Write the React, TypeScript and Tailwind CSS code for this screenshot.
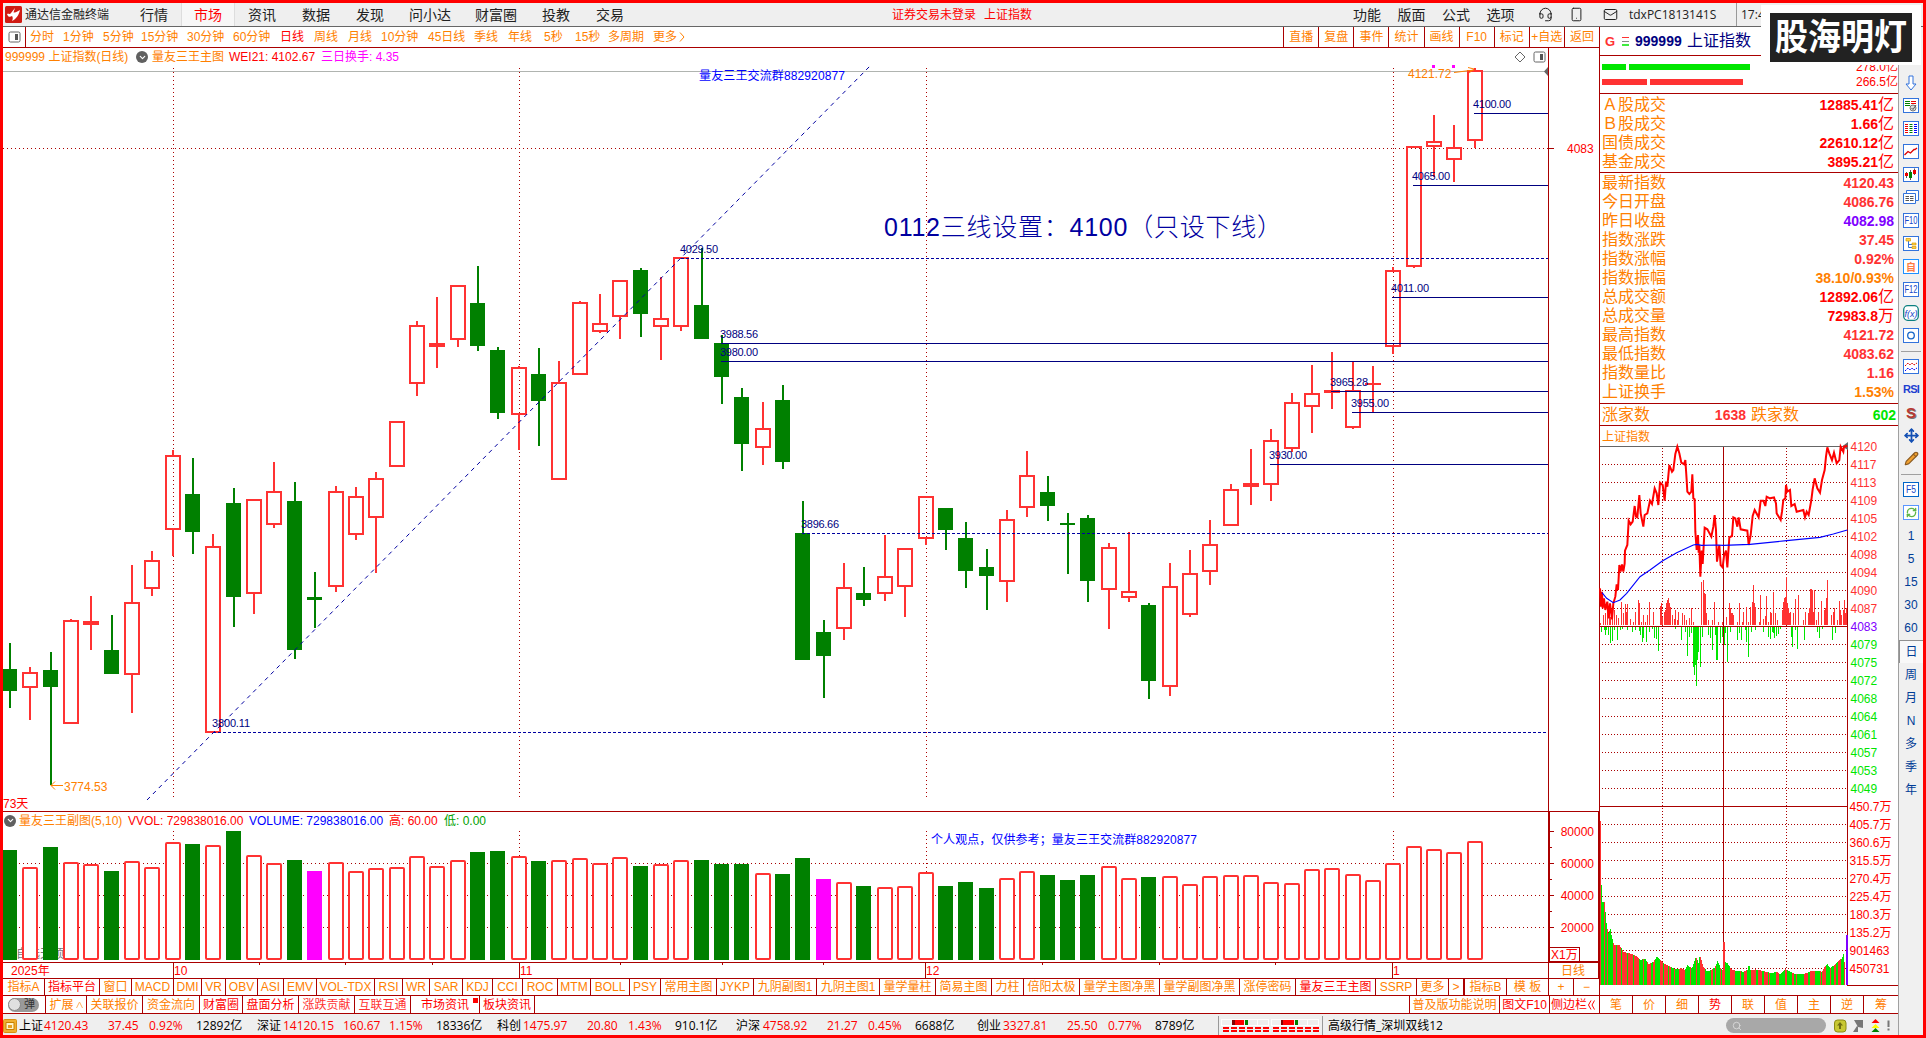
import { ReactNode } from 'react'
import { ChevronDown, Headset, Mail, Move, Pencil, RefreshCw, Search, Smartphone } from 'lucide-react'
import clsx from 'clsx'

const menus = [
  { label: '行情', w: 'w-[54px]' },
  { label: '市场', w: 'w-[54px]', active: true },
  { label: '资讯', w: 'w-[54px]' },
  { label: '数据', w: 'w-[54px]' },
  { label: '发现', w: 'w-[54px]' },
  { label: '问小达', w: 'w-[66px]' },
  { label: '财富圈', w: 'w-[66px]' },
  { label: '投教', w: 'w-[54px]' },
  { label: '交易', w: 'w-[54px]' },
]

const periods = [
  { label: '分时', w: 'w-[33px]' },
  { label: '1分钟', w: 'w-[40px]' },
  { label: '5分钟', w: 'w-[38px]' },
  { label: '15分钟', w: 'w-[46px]' },
  { label: '30分钟', w: 'w-[46px]' },
  { label: '60分钟', w: 'w-[47px]' },
  { label: '日线', w: 'w-[34px]', active: true },
  { label: '周线', w: 'w-[34px]' },
  { label: '月线', w: 'w-[33px]' },
  { label: '10分钟', w: 'w-[47px]' },
  { label: '45日线', w: 'w-[46px]' },
  { label: '季线', w: 'w-[34px]' },
  { label: '年线', w: 'w-[36px]' },
  { label: '5秒', w: 'w-[31px]' },
  { label: '15秒', w: 'w-[33px]' },
  { label: '多周期', w: 'w-[45px]' },
  { label: '更多', w: 'w-[26px]' },
]

const tools = ['直播', '复盘', '事件', '统计', '画线', 'F10', '标记', '+自选', '返回']

const indicators = [
  { label: '指标A', w: 'w-[42px]' },
  { label: '指标平台', w: 'w-[55px]', red: true },
  { label: '窗口', w: 'w-[32px]' },
  { label: 'MACD', w: 'w-[42px]' },
  { label: 'DMI', w: 'w-[28px]' },
  { label: 'VR', w: 'w-[24px]' },
  { label: 'OBV', w: 'w-[32px]' },
  { label: 'ASI', w: 'w-[26px]' },
  { label: 'EMV', w: 'w-[33px]' },
  { label: 'VOL-TDX', w: 'w-[58px]' },
  { label: 'RSI', w: 'w-[28px]' },
  { label: 'WR', w: 'w-[27px]' },
  { label: 'SAR', w: 'w-[33px]' },
  { label: 'KDJ', w: 'w-[30px]' },
  { label: 'CCI', w: 'w-[30px]' },
  { label: 'ROC', w: 'w-[35px]' },
  { label: 'MTM', w: 'w-[33px]' },
  { label: 'BOLL', w: 'w-[39px]' },
  { label: 'PSY', w: 'w-[31px]' },
  { label: '常用主图', w: 'w-[56px]' },
  { label: 'JYKP', w: 'w-[37px]' },
  { label: '九阴副图1', w: 'w-[63px]' },
  { label: '九阴主图1', w: 'w-[63px]' },
  { label: '量学量柱', w: 'w-[56px]' },
  { label: '简易主图', w: 'w-[56px]' },
  { label: '力柱', w: 'w-[32px]' },
  { label: '倍阳太极', w: 'w-[56px]' },
  { label: '量学主图净黑', w: 'w-[80px]' },
  { label: '量学副图净黑', w: 'w-[80px]' },
  { label: '涨停密码', w: 'w-[56px]' },
  { label: '量友三王主图', w: 'w-[80px]', red: true },
  { label: 'SSRP', w: 'w-[41px]' },
  { label: '更多', w: 'w-[32px]' },
  { label: '>', w: 'w-[15px]' },
  { label: '指标B', w: 'w-[43px] border-l' },
  { label: '模 板', w: 'w-[42px]' },
  { label: '+', w: 'w-[25px]' },
  { label: '−', w: 'w-[26px]' },
]

const pages = [
  { label: '扩展', w: 'w-[41px]', color: 'text-[#ff8000]' },
  { label: '关联报价', w: 'w-[56px]', color: 'text-[#ff8000]' },
  { label: '资金流向', w: 'w-[57px]', color: 'text-[#ff8000]' },
  { label: '财富圈', w: 'w-[43px]', color: 'text-[#f00]' },
  { label: '盘面分析', w: 'w-[56px]', color: 'text-[#f00]' },
  { label: '涨跌贡献', w: 'w-[56px]', color: 'text-[#ff3232]' },
  { label: '互联互通', w: 'w-[56px]', color: 'text-[#ff3232]' },
  { label: '市场资讯', w: 'w-[69px]', color: 'text-[#f00]', dot: true },
  { label: '板块资讯', w: 'w-[55px]', color: 'text-[#f00]' },
]

const quotes = [
  { t: '上证', w: 'w-[25px]' },
  { t: '4120.43', w: 'w-[64px]', red: true },
  { t: '37.45', w: 'w-[41px]', red: true },
  { t: '0.92%', w: 'w-[47px]', red: true },
  { t: '12892亿', w: 'w-[61px]' },
  { t: '深证', w: 'w-[26px]' },
  { t: '14120.15', w: 'w-[60px]', red: true },
  { t: '160.67', w: 'w-[46px]', red: true },
  { t: '1.15%', w: 'w-[47px]', red: true },
  { t: '18336亿', w: 'w-[61px]' },
  { t: '科创', w: 'w-[26px]' },
  { t: '1475.97', w: 'w-[64px]', red: true },
  { t: '20.80', w: 'w-[41px]', red: true },
  { t: '1.43%', w: 'w-[47px]', red: true },
  { t: '910.1亿', w: 'w-[61px]' },
  { t: '沪深', w: 'w-[27px]' },
  { t: '4758.92', w: 'w-[64px]', red: true },
  { t: '21.27', w: 'w-[41px]', red: true },
  { t: '0.45%', w: 'w-[47px]', red: true },
  { t: '6688亿', w: 'w-[62px]' },
  { t: '创业', w: 'w-[26px]' },
  { t: '3327.81', w: 'w-[64px]', red: true },
  { t: '25.50', w: 'w-[41px]', red: true },
  { t: '0.77%', w: 'w-[47px]', red: true },
  { t: '8789亿', w: 'w-[62px]' },
]

const turnover = [
  ['Ａ股成交', '12885.41', '亿'],
  ['Ｂ股成交', '1.66', '亿'],
  ['国债成交', '22610.12', '亿'],
  ['基金成交', '3895.21', '亿'],
]

const stats = [
  { k: '最新指数', v: '4120.43', c: 'text-[#ff3232]' },
  { k: '今日开盘', v: '4086.76', c: 'text-[#ff3232]' },
  { k: '昨日收盘', v: '4082.98', c: 'text-[#8000ff]' },
  { k: '指数涨跌', v: '37.45', c: 'text-[#ff3232]' },
  { k: '指数涨幅', v: '0.92%', c: 'text-[#ff3232]' },
  { k: '指数振幅', v: '38.10/0.93%', c: 'text-[#ff8000]' },
  { k: '总成交额', v: '12892.06', u: '亿', c: 'text-[#f00]' },
  { k: '总成交量', v: '72983.8', u: '万', c: 'text-[#f00]' },
  { k: '最高指数', v: '4121.72', c: 'text-[#ff3232]' },
  { k: '最低指数', v: '4083.62', c: 'text-[#ff3232]' },
  { k: '指数量比', v: '1.16', c: 'text-[#ff3232]' },
  { k: '上证换手', v: '1.53%', c: 'text-[#ff8000]' },
]

// kind, high, body top, body bottom, low, volume top
type Bar = [string, number, number, number, number, number]
const bars: Bar[] = [
  ['g', 643, 669, 691, 708, 850], ['r', 667, 672, 688, 720, 867], ['g', 652, 670, 687, 785, 847],
  ['r', 619, 620, 724, 724, 862], ['r', 596, 621, 625, 650, 864], ['g', 615, 650, 674, 674, 871],
  ['r', 565, 602, 675, 713, 861], ['r', 551, 560, 589, 596, 867], ['r', 450, 455, 530, 556, 842],
  ['g', 458, 494, 532, 554, 844], ['r', 534, 546, 733, 733, 845], ['g', 488, 503, 597, 627, 831],
  ['r', 499, 499, 594, 614, 855], ['r', 462, 491, 525, 528, 863], ['g', 482, 501, 650, 659, 860],
  ['g', 572, 597, 600, 628, 871], ['r', 486, 491, 587, 592, 862], ['r', 487, 496, 535, 540, 871],
  ['r', 472, 478, 518, 573, 868], ['r', 421, 421, 467, 467, 867], ['r', 321, 325, 384, 396, 856],
  ['r', 297, 343, 347, 368, 866], ['r', 285, 285, 340, 347, 860], ['g', 266, 303, 346, 351, 852],
  ['g', 347, 350, 413, 419, 851], ['r', 366, 367, 415, 450, 856], ['g', 348, 374, 401, 446, 861],
  ['r', 361, 382, 480, 480, 860], ['r', 301, 302, 375, 375, 858], ['r', 294, 323, 332, 333, 863],
  ['r', 280, 280, 317, 339, 857], ['g', 268, 270, 314, 337, 866], ['r', 277, 318, 327, 360, 864],
  ['r', 257, 257, 327, 331, 860], ['g', 248, 305, 339, 339, 860], ['g', 335, 343, 377, 404, 864],
  ['g', 388, 397, 444, 471, 864], ['r', 402, 428, 448, 465, 873], ['g', 385, 400, 462, 469, 874],
  ['g', 501, 533, 660, 660, 858], ['g', 620, 632, 656, 698, 879], ['r', 563, 587, 629, 640, 882],
  ['g', 567, 593, 600, 606, 886], ['r', 535, 576, 594, 601, 887], ['r', 548, 548, 587, 617, 886],
  ['r', 496, 496, 539, 545, 872], ['g', 508, 508, 530, 550, 886], ['g', 522, 538, 571, 588, 882],
  ['g', 549, 567, 576, 610, 888], ['r', 510, 519, 582, 602, 878], ['r', 451, 475, 508, 517, 871],
  ['g', 476, 492, 506, 521, 875], ['g', 513, 523, 525, 574, 880], ['g', 515, 518, 581, 602, 875],
  ['r', 543, 547, 590, 629, 866], ['r', 532, 591, 598, 602, 878], ['g', 603, 605, 681, 699, 877],
  ['r', 563, 586, 687, 696, 876], ['r', 550, 573, 615, 617, 884], ['r', 520, 544, 572, 585, 876],
  ['r', 484, 489, 526, 526, 875], ['r', 449, 483, 487, 505, 875], ['r', 429, 440, 485, 501, 882],
  ['r', 393, 402, 449, 452, 883], ['r', 365, 393, 407, 433, 869], ['r', 352, 390, 393, 409, 868],
  ['r', 362, 390, 428, 429, 874], ['r', 366, 383, 385, 412, 880], ['r', 267, 270, 347, 354, 863],
  ['r', 146, 146, 267, 268, 846], ['r', 115, 141, 147, 177, 849], ['r', 125, 147, 160, 182, 852],
  ['r', 68, 70, 141, 148, 841],
]

const highlighted = [15, 40]
const barX = (i: number) => Math.round(10 + 20.345 * i)

const levels = [
  { x: 1474, y: 113, t: '4100.00' },
  { x: 1413, y: 185, t: '4065.00' },
  { x: 681, y: 258, t: '4029.50', dash: true },
  { x: 1392, y: 297, t: '4011.00' },
  { x: 721, y: 343, t: '3988.56' },
  { x: 721, y: 361, t: '3980.00' },
  { x: 1331, y: 391, t: '3965.28' },
  { x: 1352, y: 412, t: '3955.00' },
  { x: 1270, y: 464, t: '3930.00' },
  { x: 802, y: 533, t: '3896.66', dash: true },
  { x: 213, y: 732, t: '3800.11', dash: true },
]

const months = [173, 519, 926, 1393]

function Candle({ bar, i }: { bar: Bar; i: number }) {
  const [kind, hi, top, bot, lo] = bar
  const x = barX(i)
  const color = kind === 'g' ? '#008000' : '#ff3232'
  const solid = kind === 'g' || bot - top <= 4
  return (
    <g>
      {top > hi && <rect x={x - 1} y={hi} width={2} height={top - hi} fill={color} />}
      {lo > bot && <rect x={x - 1} y={bot} width={2} height={lo - bot} fill={color} />}
      {solid ? (
        <rect x={x - 8} y={top} width={kind === 'g' ? 15 : 16} height={bot - top} fill={color} />
      ) : (
        <rect x={x - 7} y={top + 1} width={14} height={bot - top - 2} fill="none" stroke={color} strokeWidth={2} />
      )}
    </g>
  )
}

function MainChart() {
  return (
    <svg className="block shrink-0 overflow-visible" width={1596} height={746} viewBox="3 66 1596 746" fontSize={12}>
      <g shapeRendering="crispEdges">
        <path d="M3 71.5H1548" stroke="#b0b4b0" />
        {months.map((x) => (
          <path key={x} d={`M${x + 0.5} 68V798`} stroke="#a00" strokeDasharray="1 3" />
        ))}
        <path d="M3 148.5H1548" stroke="#a00" strokeDasharray="1 3" />
        {bars.map((b, i) => <Candle key={i} bar={b} i={i} />)}
        {levels.map((l) => (
          <path key={l.t} d={`M${l.x} ${l.y + 0.5}H1548`} stroke={l.dash ? '#0000a0' : '#000080'} strokeDasharray={l.dash ? '3 2' : undefined} />
        ))}
        <path d="M1548.5 66V812M3 811.5H1599M1548 148.5H1554" stroke="#a00" />
        <rect x={1432} y={65} width={3} height={3} fill="#f0f" />
        <rect x={1452} y={65} width={3} height={3} fill="#f0f" />
      </g>
      <path d="M147 800L870 66" stroke="#0000a0" strokeDasharray="4.2 4.2" />
      <path d="M1548 67L1544 71.5L1548 76Z" fill="#666" />
      {levels.map((l) => (
        <text key={l.t} x={l.x - 1} y={l.y - 5} fontSize={11} textLength={38} fill="#000080">{l.t}</text>
      ))}
      <text x={699} y={80} fill="#00f" textLength={146}>量友三王交流群882920877</text>
      <text x={884} y={236} fontSize={25} fill="#0000a0" textLength={398} fontWeight={300}>0112三线设置：4100（只设下线）</text>
      <g fill="#ff8000" stroke="none">
        <text x={1408} y={78}>4121.72</text>
        <text x={64} y={791}>3774.53</text>
        <path d="M51 785.5H63M55 781.5L51 785.5L55 789.5M1454 72.5L1474 70M1468 67.5L1474 69L1469 73" fill="none" stroke="#ff8000" />
      </g>
      <text x={1567} y={153} fill="#f00">4083</text>
      <text x={3} y={808} fill="#f00">73天</text>
    </svg>
  )
}

function VolumeChart() {
  return (
    <svg className="block shrink-0 overflow-visible" width={1596} height={150} viewBox="3 829 1596 150" fontSize={12}>
      <g shapeRendering="crispEdges" stroke="#a00" strokeDasharray="1 3">
        {months.map((x) => <path key={x} d={`M${x + 0.5} 831V960`} />)}
        {[863, 895, 927].map((y) => <path key={y} d={`M3 ${y + 0.5}H1545`} />)}
      </g>
      <text x={16} y={958} fill="#777">自选天顶</text>
      {bars.map((b, i) => {
        const x = barX(i)
        if (highlighted.includes(i)) return <rect key={i} x={x - 8} y={b[5]} width={15} height={960 - b[5]} fill="#f0f" />
        if (b[0] === 'g') return <rect key={i} x={x - 8} y={b[5]} width={15} height={960 - b[5]} fill="#008000" />
        return <rect key={i} x={x - 7} y={b[5] + 1} width={14} height={958 - b[5]} rx={1} fill="#fff" stroke="#ff3232" strokeWidth={2} />
      })}
      <text x={931} y={844} fill="#00f" textLength={266}>个人观点，仅供参考；量友三王交流群882920877</text>
      <g shapeRendering="crispEdges" fill="none" stroke="#a00">
        <path d="M3 962.5H1599M3 978.5H1599M1548.5 829V979M1549.5 829V962M1598.5 829V979M1549 961.5H1599" />
        <path d="M173.5 962V978M519.5 962V978M925.5 962V978M1392.5 962V978" />
        <path d="M259.5 962V965M345.5 962V965M432.5 962V965M620.5 962V965M722.5 962V965M823.5 962V965M1042.5 962V965M1159.5 962V965M1275.5 962V965" />
        <path d="M1549 831.5H1554M1549 863.5H1554M1549 895.5H1554M1549 927.5H1554M1549 847.5H1552M1549 879.5H1552M1549 911.5H1552" />
        <path d="M1549 947.5H1579.5V961" />
      </g>
      <g fill="#f00">
        {[80000, 60000, 40000, 20000].map((v, i) => (
          <text key={v} x={1594} y={836 + i * 32} textAnchor="end">{v}</text>
        ))}
        <text x={1551} y={959}>X1万</text>
        <text x={11} y={975}>2025年</text>
        <text x={174} y={975}>10</text>
        <text x={520} y={975}>11</text>
        <text x={926} y={975}>12</text>
        <text x={1393} y={975}>1</text>
      </g>
      <text x={1561} y={975} fill="#ff8000">日线</text>
    </svg>
  )
}

// intraday series, three units per pixel
const priceLine =
  '30,475 33,530 36,485 38,535 42,505 46,540 52,515 56,565 60,520 66,568 70,520 76,500 80,463 84,480 88,405 92,425 96,403 100,425 104,400 105,362 112,345 116,272 122,283 128,275 134,228 138,260 142,262 148,195 152,250 160,290 164,255 172,250 180,212 186,222 194,175 200,190 205,225 210,158 218,165 224,212 228,155 232,170 238,105 246,125 250,120 256,72 262,50 268,70 274,98 282,103 286,90 290,150 292,185 298,192 304,185 307,133 310,205 314,208 316,305 320,360 324,315 326,368 328,345 331,440 335,362 338,402 344,293 352,298 364,320 370,290 374,255 378,300 381,395 388,345 392,405 398,412 402,378 408,362 412,412 418,322 426,318 430,262 436,265 442,290 446,262 452,298 472,302 476,345 482,315 488,258 494,240 506,262 512,212 520,212 526,228 530,200 540,205 552,202 558,220 560,250 572,270 576,245 580,210 586,205 588,165 592,185 600,180 604,228 614,222 620,245 640,240 645,262 650,245 656,255 664,210 668,178 674,145 682,175 690,188 696,150 704,120 708,80 712,52 718,70 726,90 732,68 740,100 748,90 752,50 760,65 762,50 772,48'
const averageLine =
  '36,488 50,505 70,518 90,510 110,490 150,440 180,420 217,393 260,368 310,345 320,343 335,346 380,345 400,346 480,343 590,332 690,322 730,312 772,300'

const upTicks =
  '31,580 40,555 46,548 52,535 58,530 62,560 66,560 74,540 80,555 85,565 95,515 101,550 107,522 110,545 113,522 121,568 130,575 137,545 145,510 148,520 155,575 160,555 166,575 172,555 178,516 190,547 211,528 214,520 217,560 222,545 226,540 229,518 232,510 235,503 238,518 241,530 247,555 253,568 256,540 262,570 265,545 277,548 283,555 289,570 298,565 305,535 310,575 334,455 340,449 343,490 346,492 349,550 355,570 367,570 373,516 385,575 397,575 409,560 418,518 421,535 424,548 427,548 430,555 442,575 448,518 457,575 460,545 469,530 475,575 481,530 487,515 490,465 493,520 496,530 508,575 511,495 520,568 526,558 530,498 535,575 541,545 544,548 550,485 556,550 562,570 577,540 580,515 583,505 586,500 589,440 592,520 595,535 598,550 601,545 610,550 616,508 625,495 640,570 646,545 655,550 658,535 661,477 664,478 667,480 670,545 673,480 679,570 685,545 694,512 703,540 706,535 709,505 712,450 724,555 730,545 733,535 742,570 748,512 751,540 754,555 760,540 763,510 766,550 769,535'
const downTicks =
  '34,605 42,600 46,615 50,600 56,615 61,640 67,632 73,600 82,630 91,600 97,598 112,600 127,605 136,600 148,602 151,615 157,635 160,625 168,635 178,605 187,598 193,625 199,628 205,662 256,598 274,630 286,605 292,678 298,622 304,610 310,710 313,735 316,704 319,767 322,690 325,665 331,710 337,620 355,615 361,625 367,660 376,615 379,690 382,690 391,640 397,620 403,645 406,610 412,695 421,605 442,630 448,610 454,630 466,600 469,635 475,680 484,605 496,600 520,605 535,620 541,627 547,605 550,610 553,625 559,618 565,612 571,598 604,620 607,650 616,600 622,657 643,630 682,605 688,625 697,598 727,630 736,608'
const volumeEnvelope =
  '31,124 34,315 37,367 43,367 46,395 50,440 55,458 61,447 66,475 72,495 88,495 100,515 125,522 140,530 152,540 165,535 175,552 190,545 200,530 210,540 225,553 240,560 255,567 275,565 285,570 292,555 305,565 318,530 325,548 329,526 340,560 350,573 360,572 375,562 382,543 392,565 398,570 402,487 405,545 412,550 425,570 460,575 472,570 476,553 482,572 495,568 520,573 545,580 560,575 570,582 586,568 600,575 615,583 650,580 665,572 680,573 695,575 705,558 712,553 720,565 735,553 745,543 755,535 762,516 765,610'
const greenRuns =
  '34,40 46,50 55,67 79,80 94,96 112,113 130,132 148,158 163,170 184,188 196,208 220,222 233,236 244,252 256,259 262,265 286,300 304,318 322,330 345,363 370,374 379,388 392,395 403,420 436,448 454,460 470,482 498,502 517,520 534,536 540,556 568,584 592,606 612,618 622,640 655,658 676,688 694,696 709,720 724,730 739,742 752,760'

const pairs = (s: string) => s.split(' ').map((p) => p.split(',').map(Number))

function volumeBars() {
  const env = pairs(volumeEnvelope)
  const runs = pairs(greenRuns)
  const out: { x: number; y: number; green: boolean }[] = []
  for (let x = 31; x < 766; x += 3) {
    const k = Math.max(1, env.findIndex((p) => p[0] >= x))
    const [x0, y0] = env[k - 1]
    const [x1, y1] = env[k]
    out.push({ x, y: Math.round(y0 + ((y1 - y0) * (x - x0)) / (x1 - x0)), green: runs.some(([a, b]) => x >= a && x <= b) })
  }
  return out
}

const priceLabels = [4120, 4117, 4113, 4109, 4105, 4102, 4098, 4094, 4090, 4087, 4083, 4079, 4075, 4072, 4068, 4064, 4061, 4057, 4053, 4049]
const volumeLabels = ['450.7万', '405.7万', '360.6万', '315.5万', '270.4万', '225.4万', '180.3万', '135.2万', '901463', '450731']

function IntradayChart() {
  return (
    <svg className="block shrink-0 overflow-visible" width={298} height={549} viewBox="1600 446 298 549" fontSize={12}>
      <g shapeRendering="crispEdges" stroke="#a00">
        {Array.from({ length: 29 }, (_, i) => i + 1)
          .filter((i) => i !== 10 && i !== 20)
          .map((i) => <path key={i} d={`M1602 ${446.5 + i * 18}H1847`} strokeDasharray="1 2" />)}
        <path d="M1662.5 448V985M1786.5 448V985" strokeDasharray="1 2" />
      </g>
      <g shapeRendering="crispEdges">
        <g transform="translate(1590 430) scale(0.33333)">
          {pairs(upTicks).map(([x, y]) => <rect key={x} x={x - 1} y={y} width={3} height={586 - y} fill="#ff3232" />)}
          {pairs(downTicks).map(([x, y]) => <rect key={x} x={x - 1} y={588} width={3} height={y - 588} fill="#00e600" />)}
        </g>
        <g transform="translate(1590 780) scale(0.33333)">
          {volumeBars().map((b) => <rect key={b.x} x={b.x - 1} y={b.y} width={3} height={616 - b.y} fill={b.green ? '#00e600' : '#ff3232'} />)}
        </g>
        <path d="M1723.5 446V985M1600 626.5H1847M1600 806.5H1847M1847.5 446V985M1847 985.5H1898" stroke="#a00" />
        <path d="M1600 446.5H1847" stroke="#666" />
        <rect x={1723} y={942} width={2} height={43} fill="#ff3232" />
        <rect x={1846} y={935} width={2} height={50} fill="#8000ff" />
      </g>
      <path d="M1848 442V450L1842 446.5Z" fill="#666" />
      <g transform="translate(1590 430) scale(0.33333)" fill="none">
        <polyline points={priceLine} stroke="#f00" strokeWidth={6} />
        <polyline points={averageLine} stroke="#00f" strokeWidth={3.4} />
      </g>
      {priceLabels.map((p, i) => (
        <text key={p} x={1850.5} y={451 + i * 18} fill={i < 10 ? '#ff3232' : i === 10 ? '#8000ff' : '#00e600'}>{p}</text>
      ))}
      {volumeLabels.map((p, i) => (
        <text key={p} x={1849.5} y={811 + i * 18} fill="#f00">{p}</text>
      ))}
    </svg>
  )
}

function Fold() {
  return (
    <span className="flex size-3 shrink-0 items-center justify-center rounded-full bg-[#606060] text-white">
      <ChevronDown size={9} strokeWidth={3} />
    </span>
  )
}

function PanelIcon() {
  return (
    <svg width={13} height={12} viewBox="0 0 13 12" fill="none">
      <rect x={1} y={1} width={11} height={10} rx={1.5} stroke="#666" />
      <rect x={7} y={3} width={3} height={6} fill="#555" />
    </svg>
  )
}

// framed 16px glyph used in the right tool strip
function Frame({ children, color = '#3273dc' }: { children: ReactNode; color?: string }) {
  return (
    <svg width={16} height={15} viewBox="0 0 16 15" fill="none">
      <rect x={0.5} y={0.5} width={15} height={14} fill="#fff" stroke={color} />
      {children}
    </svg>
  )
}

const stripTop: ReactNode[] = [
  <svg width={12} height={16} viewBox="0 0 12 16" fill="#fff" stroke="#3273dc"><path d="M4 1H8V9H11L6 15L1 9H4Z" /></svg>,
  <Frame>
    <path d="M2 3.5H7M2 5.5H7M2 7.5H7" stroke="#008000" />
    <path d="M8 3.5H13M8 5.5H13" stroke="#e00" />
    <circle cx={10} cy={10} r={3} stroke="#777" fill="#ddd" />
    <path d="M8.500 10L10 11.500L13 7" stroke="#555" />
  </Frame>,
  <Frame>
    <path d="M2 3.500H5M2 5.500H5M2 7.500H5M2 9.500H5M2 11.500H5" stroke="#e00" />
    <path d="M6.500 3.500H9.500M6.500 5.500H9.500M6.500 7.500H9.500M6.500 9.500H9.500M6.500 11.500H9.500" stroke="#008000" />
    <path d="M11 3.500H14M11 5.500H14M11 7.500H14M11 9.500H14M11 11.500H14" stroke="#00f" />
  </Frame>,
  <Frame><path d="M1.500 11L5 7.500L7.500 9L11 5.500H12L14 4" stroke="#d00" strokeWidth={1.3} /></Frame>,
  <Frame>
    <path d="M3.500 5V11M7.500 3V13M11.500 1.500V8" stroke="#555" />
    <path d="M2 6H5V9H2ZM10 3H13V7H10Z" fill="#e00" />
    <path d="M6 5H9V11H6Z" fill="#008000" />
  </Frame>,
  <svg width={16} height={15} viewBox="0 0 16 15" fill="#fff" stroke="#3273dc">
    <path d="M3.500 0.500H15.500V10.500H3.500Z" />
    <path d="M0.500 3.500H12.500V13.500H0.500Z" />
    <path d="M2.500 6.500H6M7 6.500H10.500M2.500 8.500H6M7 8.500H10.500M2.500 10.500H6M7 10.500H10.500" stroke="#555" />
  </svg>,
  <Frame><text x={1.500} y={11} fontSize={10} textLength={13} lengthAdjust="spacingAndGlyphs" fill="#1446c8">F10</text></Frame>,
  <Frame>
    <path d="M5.500 5V11.500H9M5.500 8.500H9" stroke="#3273dc" />
    <path d="M3 2.500H7.500V5H3ZM9 7H13V9H9ZM9 10.500H13V12.500H9Z" fill="#ffd24a" stroke="#d89b00" strokeWidth={0.700} />
  </Frame>,
  <Frame color="#1e90ff"><text x={3} y={11.500} fontSize={10} fontWeight={700} fill="#ff7c43">自</text></Frame>,
  <Frame><text x={1.500} y={11} fontSize={10} textLength={13} lengthAdjust="spacingAndGlyphs" fill="#1446c8">F12</text></Frame>,
  <svg width={16} height={16} viewBox="0 0 16 16" fill="none">
    <rect x={0.700} y={0.700} width={14.600} height={14.600} rx={4} fill="#fff" stroke="#0b8080" strokeWidth={1.300} />
    <text x={1.500} y={11.500} fontSize={9} fontStyle="italic" textLength={13} lengthAdjust="spacingAndGlyphs" fill="#1446c8">f(x)</text>
  </svg>,
  <Frame><circle cx={8} cy={7.500} r={3.300} stroke="#1464c8" strokeWidth={1.300} /></Frame>,
]

const stripMid: ReactNode[] = [
  <Frame>
    <path d="M2 7L5 4L7 6L9 4L11 6L14 4" stroke="#d00" strokeDasharray="2 1" />
    <path d="M2 12L5 9L7 11L9 9L11 11L14 9" stroke="#00f" strokeDasharray="2 1" />
  </Frame>,
  <span className="text-[11px] font-bold tracking-[-0.8px] text-[#1e3fd0]">RSI</span>,
  <span className="text-[15px] font-bold text-[#b93a32] [text-shadow:1px_1px_0_#777]">S</span>,
  <Move size={15} strokeWidth={2.800} className="text-[#1450b4]" />,
  <Pencil size={15} strokeWidth={1.800} className="fill-[#f0a030] text-[#8a5a20]" />,
]

const stripText = ['1', '5', '15', '30', '60', '日', '周', '月', 'N', '多', '季', '年']

function ToolStrip() {
  return (
    <aside className="flex w-[25px] shrink-0 flex-col items-center border-l border-[#a0a0a0] bg-[#f0f0f0] pt-11 text-xs text-[#003c96]">
      {stripTop.map((n, i) => <div key={i} className="flex h-[23px] shrink-0 items-center">{n}</div>)}
      <div className="flex h-2 w-full items-center px-0.5"><hr className="w-full border-[#a0a0a0]" /></div>
      {stripMid.map((n, i) => <div key={i} className="flex h-[23px] shrink-0 items-center">{n}</div>)}
      <div className="flex h-2 w-full items-center px-0.5"><hr className="w-full border-[#a0a0a0]" /></div>
      <div className="flex h-[23px] items-center">
        <Frame color="#0064c8"><text x={3} y={11} fontSize={10} textLength={10} lengthAdjust="spacingAndGlyphs" fill="#1446c8">F5</text></Frame>
      </div>
      <div className="flex h-[23px] items-center">
        <span className="flex h-[15px] w-4 items-center justify-center border border-[#5a96ff] bg-white">
          <RefreshCw size={11} strokeWidth={3} className="text-[#5fb548]" />
        </span>
      </div>
      {stripText.map((t) => (
        <div
          key={t}
          className={clsx(
            'flex h-[23px] w-full shrink-0 items-center justify-center leading-none',
            t === '日' && 'mt-px border-t border-l border-[#909090] bg-[#f8f8f8]',
          )}
        >
          {t}
        </div>
      ))}
    </aside>
  )
}

function MenuBar() {
  return (
    <header className="flex h-6 shrink-0 items-center border-b border-[#666] bg-[#efefef] text-sm leading-none text-[#222]">
      <div className="flex w-[124px] items-center gap-[3px] pl-0.5">
        <svg width={17} height={17} viewBox="0 0 17 17">
          <rect width={17} height={17} rx={1.500} fill="#cf1a12" />
          <path d="M2 8C4 7 4.500 9 6 7L10 2L8.500 6.500C11 7 13 5 15 4C14 9 11 13 7 15C8 13 8 11 7 10C5 11.500 3 11 2 8Z" fill="#fff" />
        </svg>
        <span className="text-xs">通达信金融终端</span>
      </div>
      {menus.map((m) => (
        <span
          key={m.label}
          className={clsx('flex h-full items-center justify-center', m.w, m.active && 'border-x border-[#ddd] bg-[#f7f7f7] text-[#f00]')}
        >
          {m.label}
        </span>
      ))}
      <div className="flex w-[716px] shrink-0 gap-2 pl-[255px] text-xs text-[#f00]">
        <span>证券交易未登录</span>
        <span>上证指数</span>
      </div>
      <div className="flex w-[185px] shrink-0 gap-[16.5px] whitespace-nowrap">
        <span>功能</span>
        <span>版面</span>
        <span>公式</span>
        <span>选项</span>
      </div>
      <Headset size={15} strokeWidth={1.600} className="mr-[16px] shrink-0" />
      <Smartphone size={15} strokeWidth={1.600} className="mr-[19px] shrink-0" />
      <Mail size={15} strokeWidth={1.600} className="mr-[11px] shrink-0" />
      <span className="w-[107px] shrink-0 font-['Open_Sans',sans-serif] text-xs">tdxPC1813141S</span>
      <span className="flex h-full shrink-0 items-center border-l border-[#999] pl-1 font-['Open_Sans',sans-serif] text-xs">17:4</span>
    </header>
  )
}

function PeriodBar() {
  return (
    <nav className="flex h-[21px] shrink-0 items-stretch border-b border-[#a00] text-[#ff8000]">
      <div className="flex w-[23px] items-center justify-center border-r border-[#a00]"><PanelIcon /></div>
      <div className="flex flex-1 items-center pl-1">
        {periods.map((p) => (
          <span key={p.label} className={clsx('shrink-0 whitespace-nowrap', p.w, p.active && 'text-[#f00]')}>{p.label}</span>
        ))}
        <svg width={6} height={10} viewBox="0 0 6 10" fill="none" stroke="#ff8000"><path d="M1 0.500L5 5L1 9.500" /></svg>
      </div>
      {tools.map((t) => (
        <span key={t} className="flex w-[35.100px] items-center justify-center whitespace-nowrap border-l border-[#a00]">{t}</span>
      ))}
    </nav>
  )
}

function Tabs() {
  return (
    <>
      <div className="flex h-[17px] shrink-0 border-b border-[#a00] text-[#ff8000]">
        {indicators.map((t) => (
          <span
            key={t.label}
            className={clsx('flex shrink-0 items-center justify-center whitespace-nowrap border-r border-[#a00]', t.w, t.red && 'text-[#f00]')}
          >
            {t.label}
          </span>
        ))}
      </div>
      <div className="flex h-[18px] shrink-0 border-b border-[#a00]">
        <div className="flex w-[43px] items-center border-r border-[#a00] pl-[5px]">
          <div className="flex h-[14px] w-[31px] items-center justify-between rounded-full bg-[#999] pr-1 text-[11px] text-[#333]">
            <span className="size-[13px] rounded-full border border-[#888] bg-[#e0e0e0]" />弹
          </div>
        </div>
        {pages.map((p) => (
          <span key={p.label} className={clsx('relative flex items-center justify-center whitespace-nowrap border-r border-[#a00]', p.w, p.color)}>
            {p.label}
            {p.label === '扩展' && (
              <svg width={7} height={10} viewBox="0 0 7 10" fill="none" stroke="#ffb060" className="ml-0.5"><path d="M0.500 8L3.500 2L6.500 8" /></svg>
            )}
            {p.dot && <i className="absolute top-0.5 right-px size-[5px] bg-[#f00]" />}
          </span>
        ))}
        <div className="flex-1" />
        <span className="flex w-[90px] items-center justify-center border-l border-[#a00] text-[#ff8000]">普及版功能说明</span>
        <span className="flex w-[50px] items-center justify-center whitespace-nowrap border-l border-[#a00] text-[#f00]">图文F10</span>
        <span className="flex w-[50px] items-center justify-between whitespace-nowrap border-l border-[#a00] pr-1 pl-px text-[#f00]">
          侧边栏
          <svg width={7} height={10} viewBox="0 0 7 10" fill="none" stroke="#f00"><path d="M3 0.500L0.500 5L3 9.500M6.500 0.500L4 5L6.500 9.500" /></svg>
        </span>
      </div>
    </>
  )
}

function StatsPanel() {
  return (
    <section className="flex w-[299px] shrink-0 flex-col border-l border-[#a00]">
      <div className="flex h-[29px] shrink-0 items-center border-b border-[#a00] pl-[5px] text-[#000080]">
        <span className="w-4 text-[13px] font-bold text-[#ff3232]">G</span>
        <svg width={9} height={10} viewBox="0 0 9 10" className="mr-[5px]">
          <path d="M1 1.500H8" stroke="#ff3232" />
          <path d="M1 5.500H8" stroke="#888" />
          <path d="M1 9H8" stroke="#00e600" strokeWidth={1.500} />
        </svg>
        <span className="w-[52px] text-sm font-bold">999999</span>
        <span className="text-base leading-none">上证指数</span>
      </div>
      <div className="flex h-[38px] shrink-0 flex-col justify-center border-b border-[#a00] pl-0.5 text-[#f00]">
        <div className="flex h-[15px] items-center gap-[3px]">
          <i className="h-1.5 w-6 bg-[#00e600]" />
          <i className="h-1.5 w-[121px] bg-[#00e600]" />
          <span className="ml-auto">278.0亿</span>
        </div>
        <div className="flex h-[15px] items-center gap-[3px]">
          <i className="h-1.5 w-[45px] bg-[#ff3232]" />
          <i className="h-1.5 w-[93px] bg-[#ff3232]" />
          <span className="ml-auto">266.5亿</span>
        </div>
      </div>
      <div className="flex h-[79px] shrink-0 flex-col border-b border-[#a00] pt-px pr-1 pl-0.5">
        {turnover.map(([k, v, u]) => (
          <div key={k} className="flex h-[19px] items-center text-base leading-none">
            <span className="text-[#ff8000]">{k}</span>
            <span className="ml-auto text-sm leading-none font-bold text-[#f00]">{v}</span>
            <span className="text-[#f00]">{u}</span>
          </div>
        ))}
      </div>
      <div className="flex h-[231px] shrink-0 flex-col border-b border-[#a00] pr-1 pl-0.5">
        {stats.map((s) => (
          <div key={s.k} className="flex h-[19px] items-center text-base leading-none">
            <span className="text-[#ff8000]">{s.k}</span>
            <span className={clsx('ml-auto text-sm leading-none font-bold', s.c)}>{s.v}</span>
            {s.u && <span className={s.c}>{s.u}</span>}
          </div>
        ))}
      </div>
      <div className="flex h-[22px] shrink-0 items-center border-b border-[#a00] pr-0.5 pl-0.5 text-base leading-none text-[#ff8000]">
        <span className="w-[84px]">涨家数</span>
        <span className="w-[60px] text-right text-sm leading-none font-bold text-[#ff3232]">1638</span>
        <span className="ml-[5px]">跌家数</span>
        <span className="ml-auto text-sm leading-none font-bold text-[#00e600]">602</span>
      </div>
      <div className="flex h-5 shrink-0 items-center pt-0.5 pl-0.5 text-[#ff8000]">上证指数</div>
      <IntradayChart />
      <div className="flex h-[19px] shrink-0 border-y border-[#a00] text-[#ff8000]">
        {['笔', '价', '细', '势', '联', '值', '主', '逆', '筹'].map((t) => (
          <span
            key={t}
            className={clsx('flex items-center justify-center border-[#a00]', t === '筹' ? 'flex-1' : 'w-[33px] border-r', t === '势' && 'text-[#f00]')}
          >
            {t}
          </span>
        ))}
      </div>
    </section>
  )
}

function Meter() {
  return (
    <svg width={98} height={14} viewBox="0 0 98 14" shapeRendering="crispEdges">
      <path d="M0.500 0.500H47.500V6.500H0.500ZM50.500 0.500H97.500V6.500H50.500ZM36.500 0V6M86.500 0V6" fill="none" stroke="#fff" />
      <path d="M11 1H14V6H11ZM60 1H62V6H60Z" fill="#800000" />
      <path d="M14 1H23V6H14ZM62 1H73V6H62Z" fill="#f00" />
      <path d="M24 1H27V6H24ZM74 1H77V6H74Z" fill="#008000" />
      <path d="M2 9H48M2 12H48M52 9H98M52 12H98" stroke="#f00" strokeWidth={2} strokeDasharray="6 2" />
    </svg>
  )
}

function StatusBar() {
  return (
    <footer className="flex h-[21px] shrink-0 items-center bg-[#efefef] pt-0.5 font-['Open_Sans','Noto_Sans_CJK_SC',sans-serif] text-black">
      <svg width={14} height={14} viewBox="0 0 14 14" className="mr-[2px]">
        <rect x={0.500} y={0.500} width={13} height={13} rx={1} fill="#f0b030" stroke="#d89010" />
        <path d="M3 3.500H11V10.500H3Z" fill="#fff4c8" stroke="#c88000" />
        <rect x={5} y={6} width={4} height={3} fill="#e8a020" />
      </svg>
      {quotes.map((q, i) => (
        <span key={i} className={clsx('shrink-0 whitespace-nowrap', q.w, q.red && 'text-[#f00]')}>{q.t}</span>
      ))}
      <div className="ml-px flex h-5 w-[105px] shrink-0 items-center border-x border-[#999] pl-0.5"><Meter /></div>
      <span className="ml-[5px]">高级行情_深圳双线12</span>
      <div className="mr-2 ml-auto flex h-[15px] w-[100px] items-center rounded-full bg-[#a8a8a8] pl-1.5 text-[#ddd]"><Search size={10} /></div>
      <svg width={64} height={14} viewBox="0 0 64 14">
        <rect x={0.500} y={1} width={11.500} height={12} rx={3} fill="#c8c832" stroke="#8c8c14" />
        <path d="M6 3L9 6.500H7V10H5V6.500H3Z" fill="#6e6e10" />
        <path d="M20 1H29V9L24 8ZM23 7L19 13H24L24 8" fill="#777" />
        <path d="M41.500 0L45.500 4H37.500Z" fill="#f00" />
        <path d="M41.500 5L45.500 9H37.500Z" fill="#ff0" />
        <path d="M41.500 9L45.500 13H37.500Z" fill="#008000" />
        <path d="M54.500 1.500V8M54.500 9.500V11.500" stroke="#777" strokeWidth={2} />
      </svg>
    </footer>
  )
}

export default function App() {
  return (
    <div className="relative flex h-[1038px] w-[1926px] flex-col overflow-hidden border-[3px] border-[#f00] bg-white font-['Liberation_Sans','Noto_Sans_CJK_SC',sans-serif] text-xs leading-none">
      <MenuBar />
      <div className="flex min-h-0 flex-1">
        <div className="flex w-[1895px] shrink-0 flex-col">
          <div className="flex h-[987px] shrink-0">
            <main className="flex w-[1596px] shrink-0 flex-col">
              <PeriodBar />
              <div className="flex h-[18px] shrink-0">
                <div className="flex w-[1545px] items-center pl-0.5 whitespace-pre text-[#ff8000]">
                  <span className="w-[131px]">999999 上证指数(日线)</span>
                  <Fold />
                  <span className="ml-1 w-[77px]">量友三王主图</span>
                  <span className="w-[92px] text-[#f00]">WEI21: 4102.67</span>
                  <span className="text-[#f0f]">三日换手: 4.35</span>
                  <svg width={12} height={12} viewBox="0 0 12 12" fill="none" stroke="#666" className="mr-[7px] ml-auto"><path d="M6 1L11 6L6 11L1 6Z" /></svg>
                  <div className="mr-0.5"><PanelIcon /></div>
                </div>
                <div className="w-[51px] border-l border-[#a00]" />
              </div>
              <MainChart />
              <div className="flex h-[17px] shrink-0">
                <div className="flex w-[1545px] items-center pl-px whitespace-pre text-[#ff8000]">
                  <Fold />
                  <span className="ml-[3px] w-[109px]">量友三王副图(5,10)</span>
                  <span className="w-[121px] text-[#f00]">VVOL: 729838016.00</span>
                  <span className="w-[140px] text-[#00f]">VOLUME: 729838016.00</span>
                  <span className="w-[55px] text-[#f00]">高: 60.00</span>
                  <span className="text-[#00a000]">低: 0.00</span>
                </div>
                <div className="w-[51px] border-r border-l-2 border-[#a00]" />
              </div>
              <VolumeChart />
              <Tabs />
            </main>
            <StatsPanel />
          </div>
          <StatusBar />
        </div>
        <ToolStrip />
      </div>
      {/* channel badge floating over the header */}
      <div className="absolute top-0.5 right-0.5 flex h-[60px] w-[160px] items-start justify-center bg-white pt-2">
        <div className="flex h-[49px] w-[142px] items-center justify-center bg-[#222]">
          <span className="scale-y-110 text-[33px] leading-none font-bold whitespace-nowrap text-white">股海明灯</span>
        </div>
      </div>
    </div>
  )
}
